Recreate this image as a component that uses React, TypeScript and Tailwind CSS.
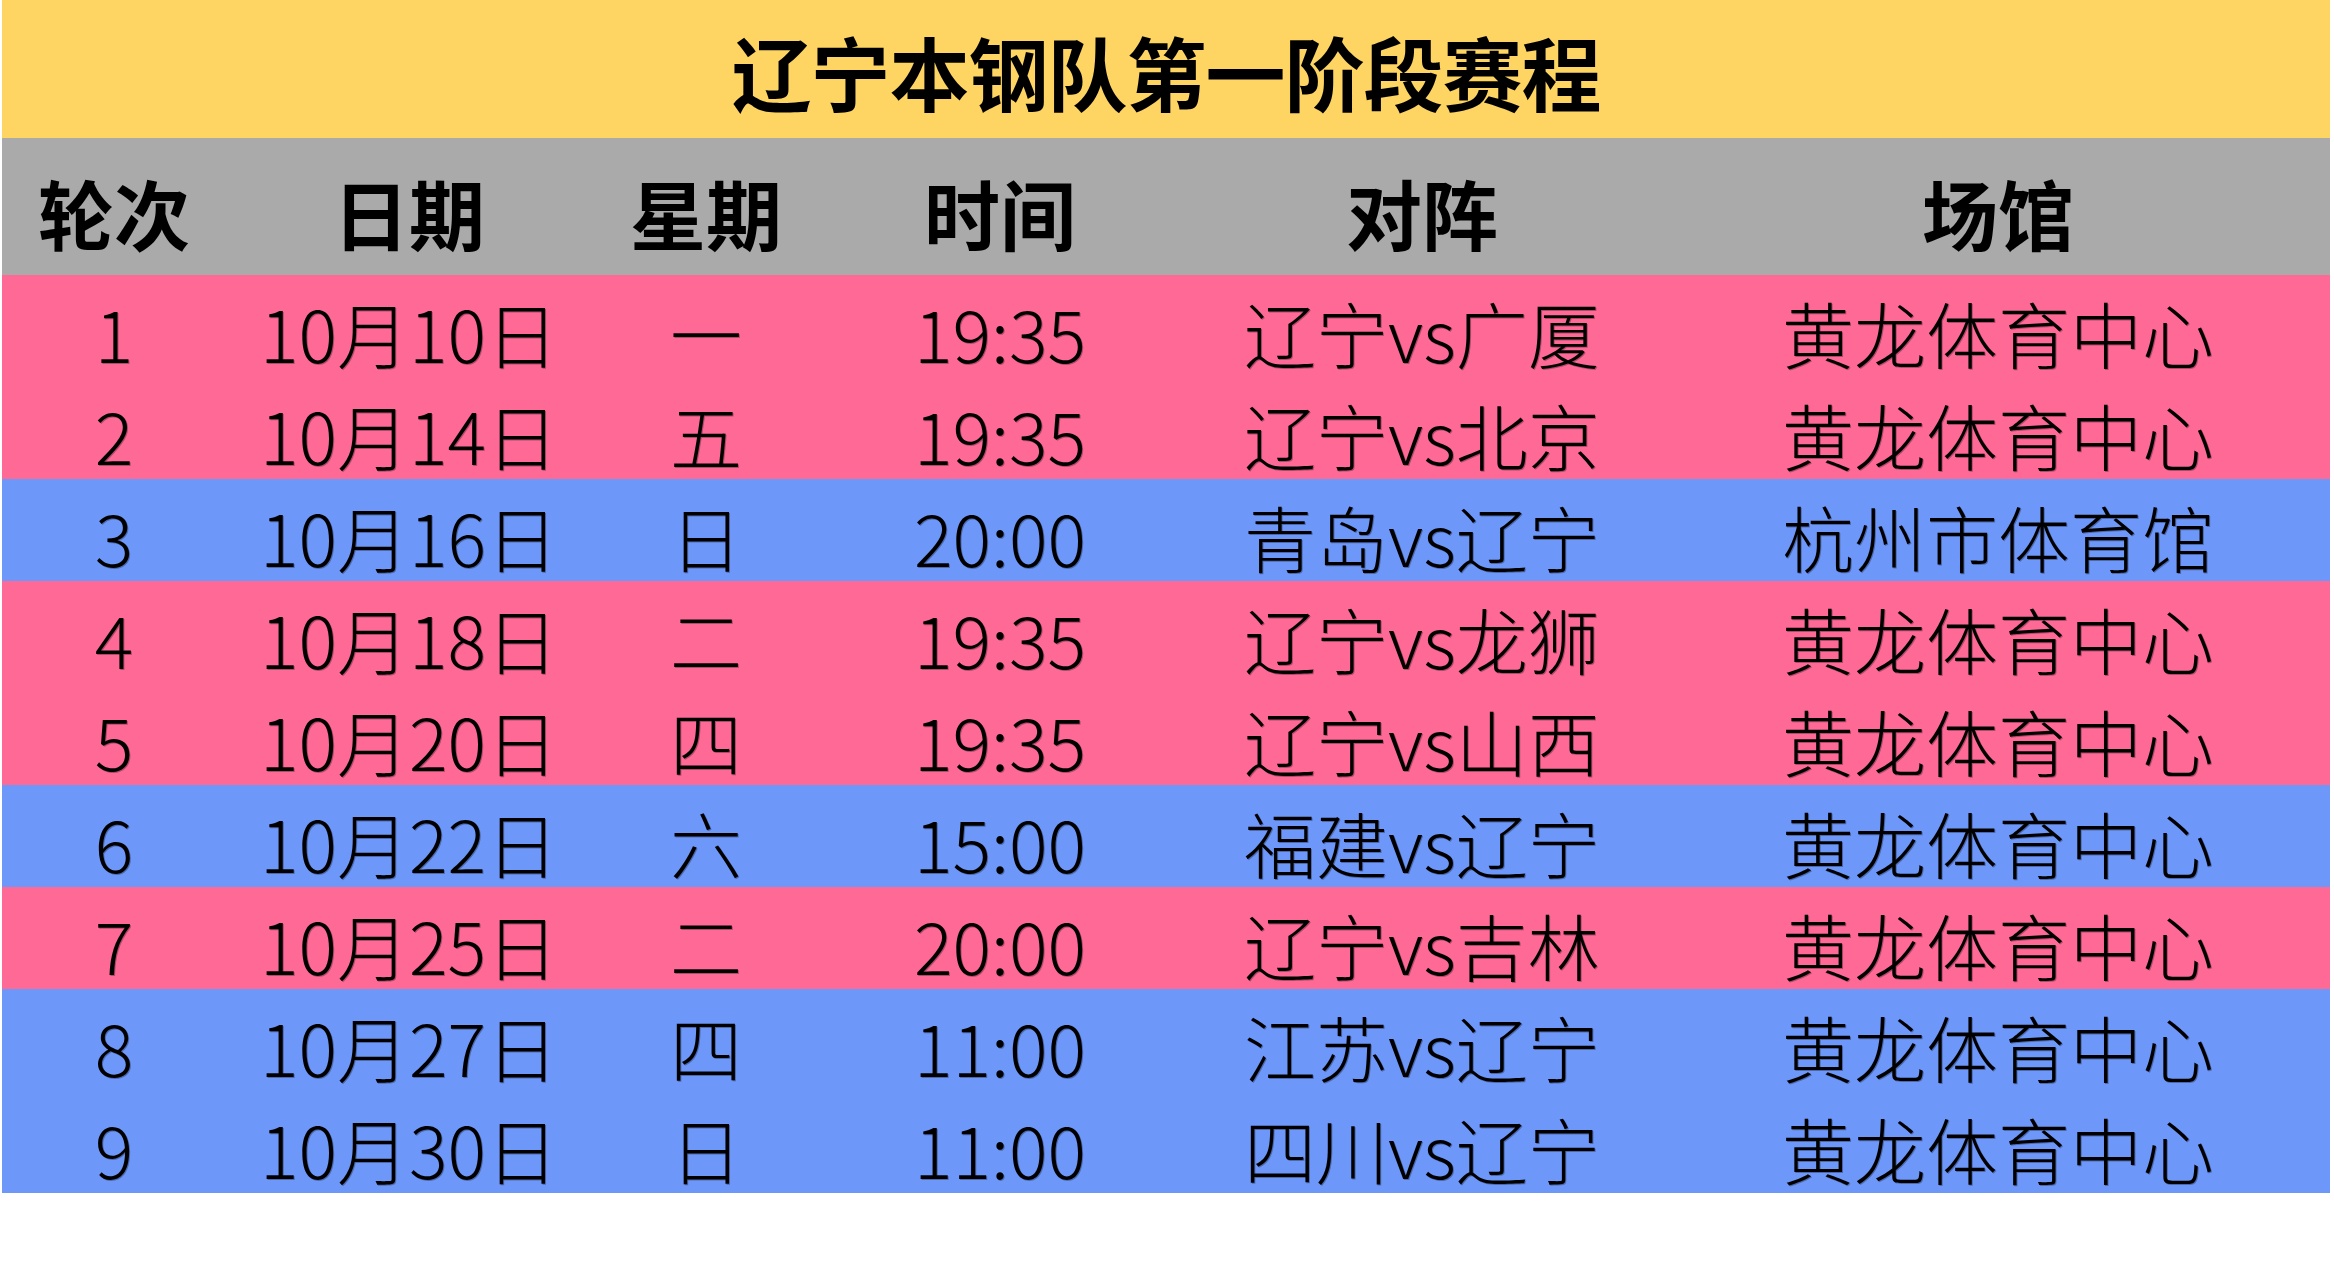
const headers = ["轮次", "日期", "星期", "时间", "对阵", "场馆"];

const games = [
  { round: "1", date: "10月10日", day: "一", time: "19:35", match: "辽宁vs广厦", venue: "黄龙体育中心", home: true },
  { round: "2", date: "10月14日", day: "五", time: "19:35", match: "辽宁vs北京", venue: "黄龙体育中心", home: true },
  { round: "3", date: "10月16日", day: "日", time: "20:00", match: "青岛vs辽宁", venue: "杭州市体育馆", home: false },
  { round: "4", date: "10月18日", day: "二", time: "19:35", match: "辽宁vs龙狮", venue: "黄龙体育中心", home: true },
  { round: "5", date: "10月20日", day: "四", time: "19:35", match: "辽宁vs山西", venue: "黄龙体育中心", home: true },
  { round: "6", date: "10月22日", day: "六", time: "15:00", match: "福建vs辽宁", venue: "黄龙体育中心", home: false },
  { round: "7", date: "10月25日", day: "二", time: "20:00", match: "辽宁vs吉林", venue: "黄龙体育中心", home: true },
  { round: "8", date: "10月27日", day: "四", time: "11:00", match: "江苏vs辽宁", venue: "黄龙体育中心", home: false },
  { round: "9", date: "10月30日", day: "日", time: "11:00", match: "四川vs辽宁", venue: "黄龙体育中心", home: false },
];

// column widths picked so each cell's centre lands where the reference has it
const cols = "grid grid-cols-[224px_366px_228px_360px_484px_668px]";

export default function App() {
  return (
    <div className="w-[2334px] h-[1280px] bg-white font-['Noto_Sans_CJK_SC','Noto_Sans',sans-serif] text-black">
      <div className="ml-[2px] w-[2328px]">
        <div className="h-[138px] bg-[#fed563] flex items-center justify-center pt-[2px]">
          <h1 className="text-[80px] font-bold leading-none tracking-[-1px]">辽宁本钢队第一阶段赛程</h1>
        </div>

        <div className={`${cols} h-[137px] bg-[#abaaaa] items-center pt-[10px]`}>
          {headers.map((h) => (
            <div key={h} className="text-center text-[76px] font-bold leading-none">
              {h}
            </div>
          ))}
        </div>

        {games.map((g) => (
          <div
            key={g.round}
            className={`${cols} h-[102px] items-center pt-[11px] text-[72px] font-light leading-none [text-shadow:1px_1px_0_rgba(0,0,0,0.3)] ${
              g.home ? "bg-[#fe6996]" : "bg-[#6e97fa]"
            }`}
          >
            <div className="text-center">{g.round}</div>
            <div className="text-center">{g.date}</div>
            <div className="text-center">{g.day}</div>
            <div className="text-center">{g.time}</div>
            <div className="text-center">{g.match}</div>
            <div className="text-center">{g.venue}</div>
          </div>
        ))}
      </div>
    </div>
  );
}
